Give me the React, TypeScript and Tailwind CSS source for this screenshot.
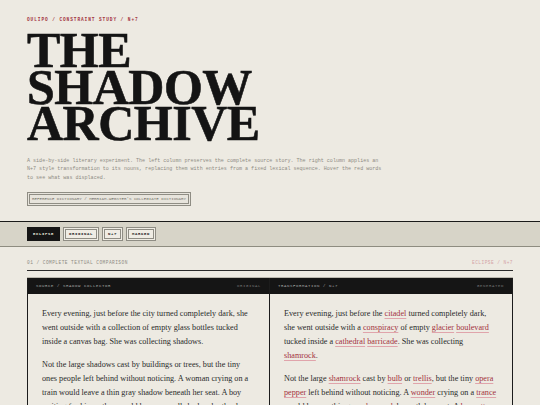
const MONO = 'font-["Liberation_Mono",monospace]'

function R({ children }: { children: string }) {
  return <span className="text-[#a3323e] underline decoration-[#e0a4ab] decoration-1 underline-offset-[2px]">{children}</span>
}

const MODOS = ['Eclipse', 'Original', 'N+7', 'Marked']

export default function App() {
  return (
    <div className="h-screen overflow-hidden bg-[#edeae2] text-[#141414]">
      <header className="px-[27px] pt-[17px] pb-[15px]">
        <p className={`${MONO} text-[4.5px] leading-[6px] font-bold tracking-[0.9px] text-[#a3323e] uppercase`}>Oulipo / Constraint Study / N+7</p>
        <h1 className='mt-[9px] font-["Liberation_Serif",serif] text-[50px] leading-[36.5px] font-bold tracking-[-0.01em] [-webkit-text-stroke:0.6px_#141414]'>
          THE
          <br />
          SHADOW
          <br />
          ARCHIVE
        </h1>
        <p className={`${MONO} mt-[15px] max-w-[360px] text-[5.06px] leading-[8.5px] text-[#8d8a82]`}>
          A side-by-side literary experiment. The left column preserves the complete source story. The right column applies an N+7 style transformation to its nouns,
          replacing them with entries from a fixed lexical sequence. Hover the red words to see what was displaced.
        </p>
        <div className={`${MONO} mt-[9px] inline-block border-[3px] border-double border-[#8f8d84] bg-[#e7e4dc] px-[2px] text-[4.15px] leading-[8px] text-[#7a776f] uppercase`}>
          Reference Dictionary / Merriam-Webster's Collegiate Dictionary
        </div>
      </header>

      <nav className="flex gap-[3px] border-t border-b border-t-[#1a1a1a] border-b-[#8e8c80] bg-[#d7d4c8] px-[27px] py-[5px]">
        {MODOS.map((modo, i) => (
          <button
            key={modo}
            type="button"
            className={`${MONO} h-[14px] border-[3px] px-[3px] text-[4px] leading-[8px] font-bold tracking-[0.6px] uppercase ${
              i === 0 ? 'border-[#151515] bg-[#151515] text-[#e6e3da]' : 'border-double border-[#8f8d84] bg-[#efece4] text-[#2a2a2a]'
            }`}
          >
            {modo}
          </button>
        ))}
      </nav>

      <section className="px-[27px] pt-[13px]">
        <div className={`${MONO} flex justify-between border-b border-[#2a2a2a] pb-[4px] text-[4.5px] leading-[6px] tracking-[0.45px] uppercase`}>
          <span className="text-[#8d8a82]">01 / Complete Textual Comparison</span>
          <span className="text-[#d4a3a6]">Eclipse / N+7</span>
        </div>

        <div className="mt-[6px] grid grid-cols-2 border-t border-[#bbb8ae]">
          <div className="border-l border-r border-l-[#1c1c1c] border-r-[#1c1c1c]">
            <div className={`${MONO} flex h-[16px] items-center justify-between bg-[#151515] px-[8px] text-[4px] tracking-[0.6px] uppercase`}>
              <span className="text-[#a8a8a8]">Source / Shadow Collector</span>
              <span className="text-[#727272]">Original</span>
            </div>
            <div className='space-y-[9px] px-[14px] pt-[13px] font-["Liberation_Serif",serif] text-[8.2px] leading-[14px] text-[#2b2b2b]'>
              <p>Every evening, just before the city turned completely dark, she went outside with a collection of empty glass bottles tucked inside a canvas bag. She was collecting shadows.</p>
              <p>
                Not the large shadows cast by buildings or trees, but the tiny ones people left behind without noticing. A woman crying on a train would leave a thin gray shadow
                beneath her seat. A boy waiting for his mother would leave a small shadow by the door.
              </p>
            </div>
          </div>
          <div className="border-r border-[#1c1c1c]">
            <div className={`${MONO} flex h-[16px] items-center justify-between bg-[#151515] px-[8px] text-[4px] tracking-[0.6px] uppercase`}>
              <span className="text-[#a8a8a8]">Transformation / N+7</span>
              <span className="text-[#727272]">Generated</span>
            </div>
            <div className='space-y-[9px] px-[14px] pt-[13px] font-["Liberation_Serif",serif] text-[8.2px] leading-[14px] text-[#2b2b2b]'>
              <p>
                Every evening, just before the <R>citadel</R> turned completely dark, she went outside with a <R>conspiracy</R> of empty <R>glacier</R> <R>boulevard</R> tucked inside
                a <R>cathedral</R> <R>barricade</R>. She was collecting <R>shamrock</R>.
              </p>
              <p>
                Not the large <R>shamrock</R> cast by <R>bulb</R> or <R>trellis</R>, but the tiny <R>opera</R> <R>pepper</R> left behind without noticing. A <R>wonder</R> crying on a{' '}
                <R>trance</R> would leave a thin gray <R>shamrock</R> beneath her seat. A <R>boycott</R> waiting for his <R>motto</R> would leave a small <R>shamrock</R> by the{' '}
                <R>dormitory</R>.
              </p>
            </div>
          </div>
        </div>
      </section>
    </div>
  )
}
